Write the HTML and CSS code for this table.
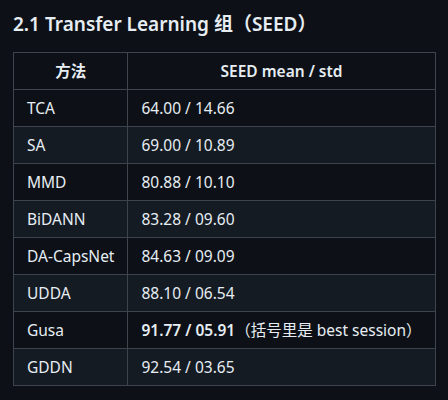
FILE: index.html
```html
<!DOCTYPE html>
<html lang="zh">
<head>
<meta charset="utf-8">
<link rel="stylesheet" href="styles.css">
</head>
<body>
<div class="markdown">
  <h3 class="title">2.1 Transfer Learning 组（SEED）</h3>
  <table class="results">
    <thead>
      <tr><th class="c1">方法</th><th class="c2">SEED mean / std</th></tr>
    </thead>
    <tbody>
      <tr><td>TCA</td><td>64.00 / 14.66</td></tr>
      <tr><td>SA</td><td>69.00 / 10.89</td></tr>
      <tr><td>MMD</td><td>80.88 / 10.10</td></tr>
      <tr><td>BiDANN</td><td>83.28 / 09.60</td></tr>
      <tr><td>DA-CapsNet</td><td>84.63 / 09.09</td></tr>
      <tr><td>UDDA</td><td>88.10 / 06.54</td></tr>
      <tr><td>Gusa</td><td><strong>91.77 / 05.91</strong>（括号里是 best session）</td></tr>
      <tr><td>GDDN</td><td>92.54 / 03.65</td></tr>
    </tbody>
  </table>
</div>
</body>
</html>
```

FILE: styles.css
```css
html, body {
  margin: 0;
  padding: 0;
  background: #0d1117;
}
body {
  color: #e6edf3;
  font-family: "Noto Sans", "Noto Sans CJK SC", sans-serif;
  font-size: 15.5px;
}
.markdown {
  padding: 12px 13px;
}
.title {
  margin: 0 0 15px 0;
  font-size: 19px;
  line-height: 25px;
  font-weight: 600;
}
.results {
  border-collapse: collapse;
  border-spacing: 0;
}
.results th,
.results td {
  border: 1px solid #3d444d;
  padding: 0 13px;
  height: 37px;
  box-sizing: border-box;
  white-space: nowrap;
  line-height: 24px;
}
.results th {
  font-weight: 600;
  text-align: center;
}
.results td {
  text-align: left;
}
.results .c1 { width: 116px; }
.results .c2 { width: 305px; }
.results tbody tr:nth-child(2n) {
  background: #151b23;
}
.results strong {
  font-weight: 600;
}
```
